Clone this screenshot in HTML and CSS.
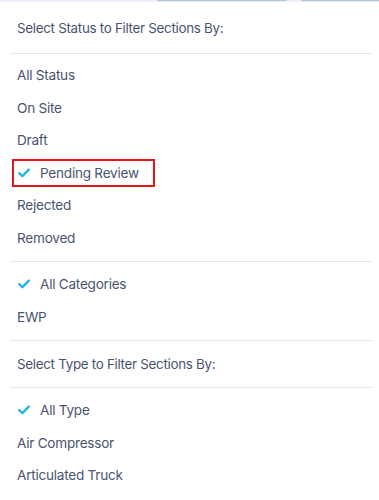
FILE: index.html
```html
<!DOCTYPE html>
<html lang="en">
<head>
    <meta charset="UTF-8">
    <meta name="viewport" content="width=device-width, initial-scale=1.0">
    <title>Filter Sections</title>
    <link rel="stylesheet" href="styles.css">
</head>
<body>
    <div class="topbar">
        <span class="tab tab-one"></span>
        <span class="tab tab-two"></span>
    </div>

    <div class="filter-menu">
        <!-- status -->
        <div class="menu-header">Select Status to Filter Sections By:</div>
        <ul class="menu-group">
            <li class="menu-item">All Status</li>
            <li class="menu-item">On Site</li>
            <li class="menu-item">Draft</li>
            <li class="menu-item selected highlighted">
                <svg class="check" viewBox="0 0 12 10" width="12" height="10"><path d="M1.2 5.2 L4.4 8.2 L10.8 1.6" fill="none" stroke="currentColor" stroke-width="2.4" stroke-linecap="round" stroke-linejoin="round"/></svg>
                <span>Pending Review</span>
            </li>
            <li class="menu-item">Rejected</li>
            <li class="menu-item">Removed</li>
        </ul>

        <!-- categories -->
        <ul class="menu-group">
            <li class="menu-item selected">
                <svg class="check" viewBox="0 0 12 10" width="12" height="10"><path d="M1.2 5.2 L4.4 8.2 L10.8 1.6" fill="none" stroke="currentColor" stroke-width="2.4" stroke-linecap="round" stroke-linejoin="round"/></svg>
                <span>All Categories</span>
            </li>
            <li class="menu-item">EWP</li>
        </ul>

        <!-- type -->
        <div class="menu-header small">Select Type to Filter Sections By:</div>
        <ul class="menu-group last">
            <li class="menu-item selected">
                <svg class="check" viewBox="0 0 12 10" width="12" height="10"><path d="M1.2 5.2 L4.4 8.2 L10.8 1.6" fill="none" stroke="currentColor" stroke-width="2.4" stroke-linecap="round" stroke-linejoin="round"/></svg>
                <span>All Type</span>
            </li>
            <li class="menu-item">Air Compressor</li>
            <li class="menu-item">Articulated Truck</li>
        </ul>
    </div>
</body>
</html>
```

FILE: styles.css
```css
body {
    margin: 0;
    background: #ffffff;
    font-family: 'Inter', 'Noto Sans', sans-serif;
    color: #4a5470;
}

.topbar {
    display: flex;
    height: 2px;
    background: #eceff5;
}

.topbar .tab {
    height: 1px;
    background: #b4c3dd;
}

.topbar .tab-one {
    margin-left: 157px;
    width: 130px;
}

.topbar .tab-two {
    margin-left: 14px;
    flex: 1;
}

.filter-menu {
    padding: 0 7px 0 10px;
}

.menu-header {
    height: 51px;
    display: flex;
    align-items: center;
    padding-left: 7px;
    font-size: 13.4px;
    letter-spacing: -0.3px;
    border-bottom: 1px solid #e3e6ee;
}

.menu-header.small {
    height: 46px;
}

.menu-group {
    list-style: none;
    margin: 0;
    padding: 6px 0 7px;
    border-bottom: 1px solid #e3e6ee;
}

.menu-group:first-of-type {
    padding-top: 5px;
}

.menu-group.last {
    border-bottom: none;
}

.menu-item {
    height: 32.5px;
    display: flex;
    align-items: center;
    padding-left: 7px;
    font-size: 13.6px;
    letter-spacing: -0.25px;
}

.menu-item .check {
    color: #2ab4e6;
    margin: 0 10px 0 1px;
}

.menu-item.highlighted {
    width: 143px;
    height: 28px;
    margin: 2px 0 2.5px 2px;
    padding-left: 3px;
    border: 2px solid #e4151b;
    box-sizing: border-box;
}
```
